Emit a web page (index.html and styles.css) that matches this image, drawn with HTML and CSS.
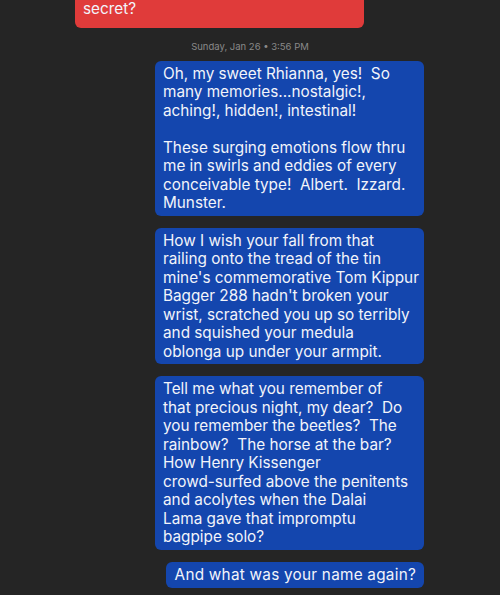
FILE: index.html
```html
<!DOCTYPE html>
<html>
<head>
<meta charset="utf-8">
<link rel="stylesheet" href="styles.css">
</head>
<body>
<div class="thread">
  <div class="row row-in">
    <div class="bubble bubble-in">secret?</div>
  </div>
  <div class="stamp">Sunday, Jan 26 • 3:56 PM</div>
  <div class="row row-out">
    <div class="bubble bubble-out wide">Oh, my sweet Rhianna, yes!&nbsp; So<br>many memories...nostalgic!,<br>aching!, hidden!, intestinal!<br>&nbsp;<br>These surging emotions flow thru<br>me in swirls and eddies of every<br>conceivable type!&nbsp; Albert.&nbsp; Izzard.<br>Munster.</div>
  </div>
  <div class="row row-out">
    <div class="bubble bubble-out wide">How I wish your fall from that<br>railing onto the tread of the tin<br>mine's commemorative Tom Kippur<br>Bagger 288 hadn't broken your<br>wrist, scratched you up so terribly<br>and squished your medula<br>oblonga up under your armpit.</div>
  </div>
  <div class="row row-out">
    <div class="bubble bubble-out wide">Tell me what you remember of<br>that precious night, my dear?&nbsp; Do<br>you remember the beetles?&nbsp; The<br>rainbow?&nbsp; The horse at the bar?<br>How Henry Kissenger<br>crowd-surfed above the penitents<br>and acolytes when the Dalai<br>Lama gave that impromptu<br>bagpipe solo?</div>
  </div>
  <div class="row row-out">
    <div class="bubble bubble-out short">And what was your name again?</div>
  </div>
</div>
</body>
</html>
```
FILE: styles.css
```css
html, body {
  margin: 0;
  padding: 0;
  background: #252525;
}
body {
  width: 500px;
  height: 595px;
  overflow: hidden;
  font-family: Inter, "Open Sans", sans-serif;
}
.thread {
  display: flex;
  flex-direction: column;
}
.row {
  display: flex;
}
.row-in {
  justify-content: flex-start;
  padding-left: 75px;
}
.row-out {
  justify-content: flex-end;
  padding-right: 76px;
  margin-top: 12px;
}
.stamp + .row-out {
  margin-top: 7px;
}
.bubble {
  box-sizing: border-box;
  color: #f2f4fa;
  font-size: 15.3px;
  line-height: 18.5px;
  white-space: nowrap;
  border-radius: 6px;
}
.bubble-in {
  width: 289px;
  background: #e03b3a;
  margin-top: -20px;
  padding: 20px 8px 9px;
}
.bubble-out {
  background: #1446ae;
  padding: 4px 8px 3px;
}
.wide {
  width: 269px;
}
.short {
  padding: 4px 8px 4px 9px;
  letter-spacing: 0.25px;
}
.stamp {
  margin-top: 12px;
  text-align: center;
  font-size: 9.5px;
  line-height: 14px;
  color: #8a8a8a;
}
```
